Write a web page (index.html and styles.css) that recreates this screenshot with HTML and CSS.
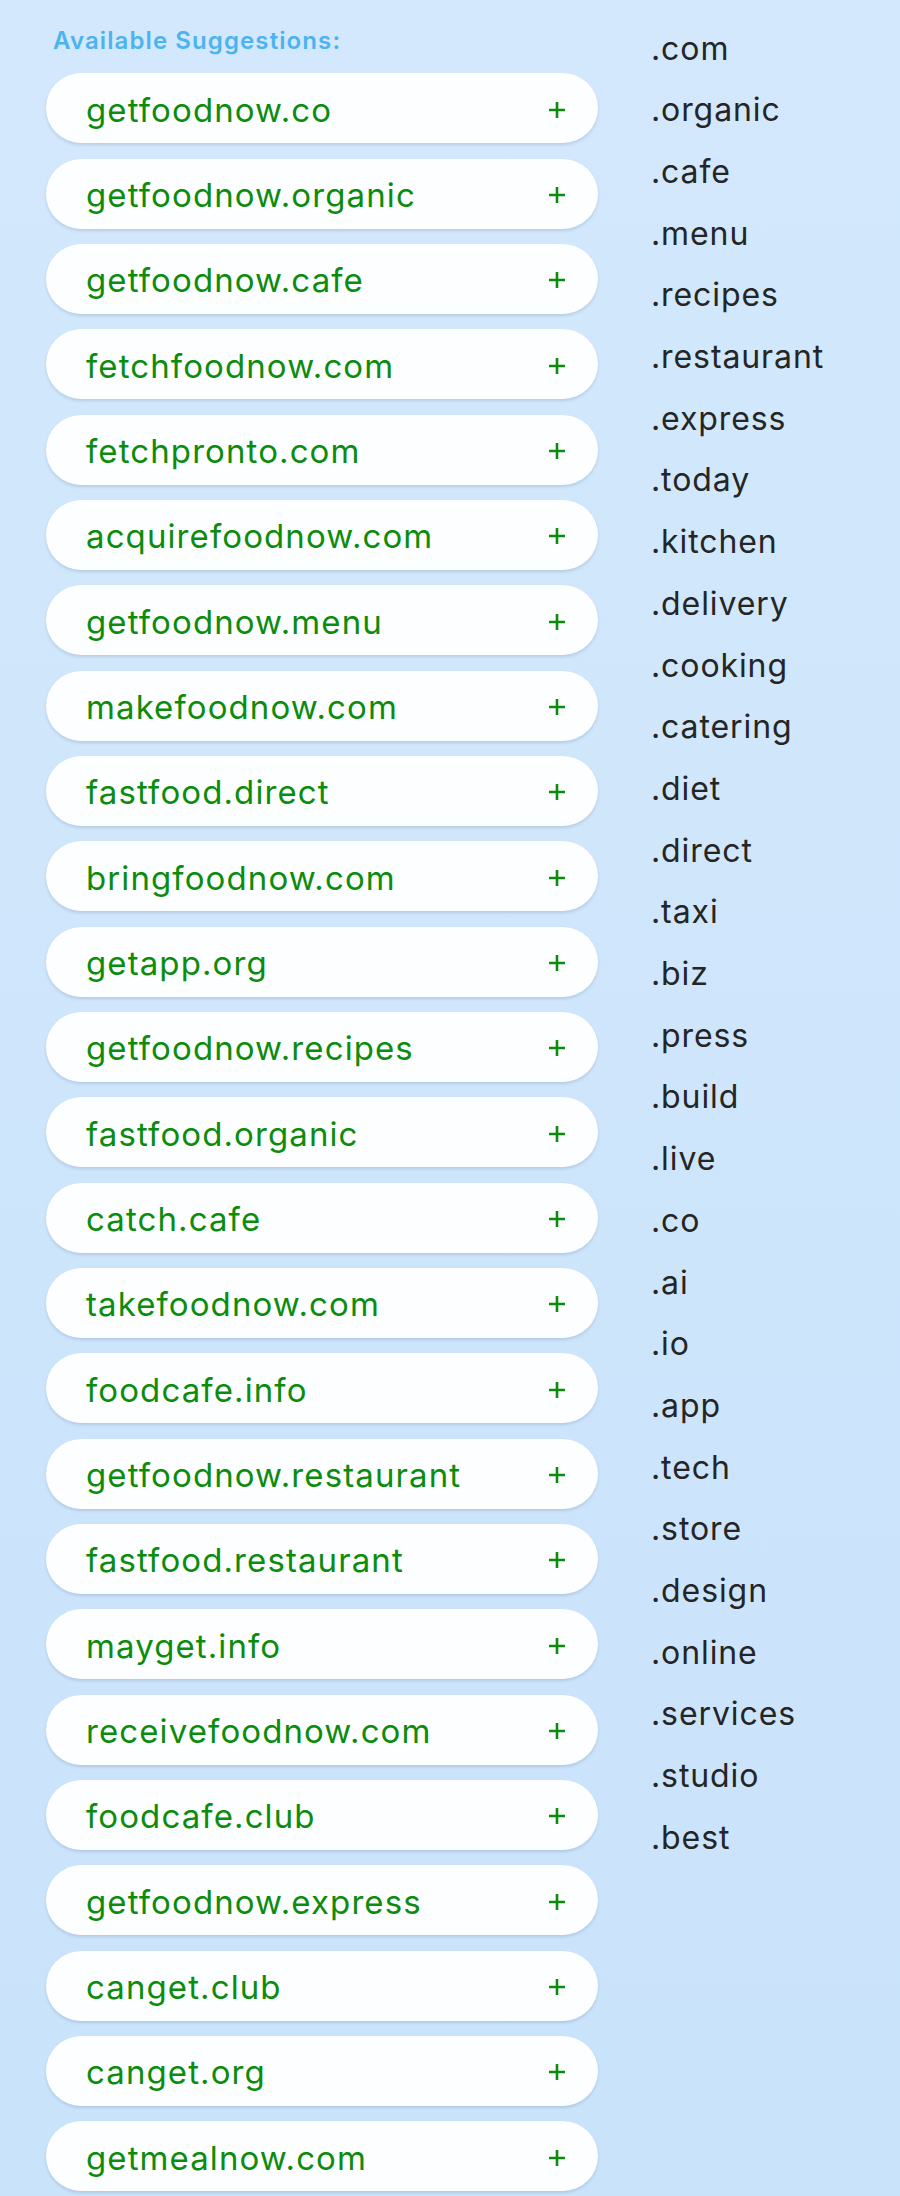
FILE: index.html
```html
<!DOCTYPE html>
<html lang="en">
<head>
<meta charset="utf-8">
<title>Available Suggestions</title>
<link rel="stylesheet" href="styles.css">
</head>
<body>
<div class="page">
  <section class="suggestions">
    <h2 class="heading">Available Suggestions:</h2>
    <ul class="pills">
      <li class="pill"><span class="name">getfoodnow.co</span><svg class="plus" viewBox="0 0 18 18"><path d="M9 1v16M1 9h16"/></svg></li>
      <li class="pill"><span class="name">getfoodnow.organic</span><svg class="plus" viewBox="0 0 18 18"><path d="M9 1v16M1 9h16"/></svg></li>
      <li class="pill"><span class="name">getfoodnow.cafe</span><svg class="plus" viewBox="0 0 18 18"><path d="M9 1v16M1 9h16"/></svg></li>
      <li class="pill"><span class="name">fetchfoodnow.com</span><svg class="plus" viewBox="0 0 18 18"><path d="M9 1v16M1 9h16"/></svg></li>
      <li class="pill"><span class="name">fetchpronto.com</span><svg class="plus" viewBox="0 0 18 18"><path d="M9 1v16M1 9h16"/></svg></li>
      <li class="pill"><span class="name">acquirefoodnow.com</span><svg class="plus" viewBox="0 0 18 18"><path d="M9 1v16M1 9h16"/></svg></li>
      <li class="pill"><span class="name">getfoodnow.menu</span><svg class="plus" viewBox="0 0 18 18"><path d="M9 1v16M1 9h16"/></svg></li>
      <li class="pill"><span class="name">makefoodnow.com</span><svg class="plus" viewBox="0 0 18 18"><path d="M9 1v16M1 9h16"/></svg></li>
      <li class="pill"><span class="name">fastfood.direct</span><svg class="plus" viewBox="0 0 18 18"><path d="M9 1v16M1 9h16"/></svg></li>
      <li class="pill"><span class="name">bringfoodnow.com</span><svg class="plus" viewBox="0 0 18 18"><path d="M9 1v16M1 9h16"/></svg></li>
      <li class="pill"><span class="name">getapp.org</span><svg class="plus" viewBox="0 0 18 18"><path d="M9 1v16M1 9h16"/></svg></li>
      <li class="pill"><span class="name">getfoodnow.recipes</span><svg class="plus" viewBox="0 0 18 18"><path d="M9 1v16M1 9h16"/></svg></li>
      <li class="pill"><span class="name">fastfood.organic</span><svg class="plus" viewBox="0 0 18 18"><path d="M9 1v16M1 9h16"/></svg></li>
      <li class="pill"><span class="name">catch.cafe</span><svg class="plus" viewBox="0 0 18 18"><path d="M9 1v16M1 9h16"/></svg></li>
      <li class="pill"><span class="name">takefoodnow.com</span><svg class="plus" viewBox="0 0 18 18"><path d="M9 1v16M1 9h16"/></svg></li>
      <li class="pill"><span class="name">foodcafe.info</span><svg class="plus" viewBox="0 0 18 18"><path d="M9 1v16M1 9h16"/></svg></li>
      <li class="pill"><span class="name">getfoodnow.restaurant</span><svg class="plus" viewBox="0 0 18 18"><path d="M9 1v16M1 9h16"/></svg></li>
      <li class="pill"><span class="name">fastfood.restaurant</span><svg class="plus" viewBox="0 0 18 18"><path d="M9 1v16M1 9h16"/></svg></li>
      <li class="pill"><span class="name">mayget.info</span><svg class="plus" viewBox="0 0 18 18"><path d="M9 1v16M1 9h16"/></svg></li>
      <li class="pill"><span class="name">receivefoodnow.com</span><svg class="plus" viewBox="0 0 18 18"><path d="M9 1v16M1 9h16"/></svg></li>
      <li class="pill"><span class="name">foodcafe.club</span><svg class="plus" viewBox="0 0 18 18"><path d="M9 1v16M1 9h16"/></svg></li>
      <li class="pill"><span class="name">getfoodnow.express</span><svg class="plus" viewBox="0 0 18 18"><path d="M9 1v16M1 9h16"/></svg></li>
      <li class="pill"><span class="name">canget.club</span><svg class="plus" viewBox="0 0 18 18"><path d="M9 1v16M1 9h16"/></svg></li>
      <li class="pill"><span class="name">canget.org</span><svg class="plus" viewBox="0 0 18 18"><path d="M9 1v16M1 9h16"/></svg></li>
      <li class="pill"><span class="name">getmealnow.com</span><svg class="plus" viewBox="0 0 18 18"><path d="M9 1v16M1 9h16"/></svg></li>
    </ul>
  </section>
  <ul class="tlds">
    <li>.com</li>
    <li>.organic</li>
    <li>.cafe</li>
    <li>.menu</li>
    <li>.recipes</li>
    <li>.restaurant</li>
    <li>.express</li>
    <li>.today</li>
    <li>.kitchen</li>
    <li>.delivery</li>
    <li>.cooking</li>
    <li>.catering</li>
    <li>.diet</li>
    <li>.direct</li>
    <li>.taxi</li>
    <li>.biz</li>
    <li>.press</li>
    <li>.build</li>
    <li>.live</li>
    <li>.co</li>
    <li>.ai</li>
    <li>.io</li>
    <li>.app</li>
    <li>.tech</li>
    <li>.store</li>
    <li>.design</li>
    <li>.online</li>
    <li>.services</li>
    <li>.studio</li>
    <li>.best</li>
  </ul>
</div>
</body>
</html>
```
FILE: styles.css
```css
html, body {
  margin: 0;
  padding: 0;
}

body {
  background: linear-gradient(180deg, #d3e8fc 0%, #c9e3fb 100%);
  min-height: 2196px;
  font-family: Inter, "Noto Sans", sans-serif;
}

.page {
  display: flex;
  align-items: flex-start;
  padding-left: 46px;
}

.suggestions {
  width: 551.5px;
  padding-top: 25.6px;
}

.heading {
  margin: 0 0 17.7px 7px;
  font-size: 24px;
  line-height: 30px;
  font-weight: 600;
  letter-spacing: 1.1px;
  color: #4db3ee;
}

.pills {
  list-style: none;
  margin: 0;
  padding: 0;
  display: flex;
  flex-direction: column;
  gap: 15.33px;
}

.pill {
  height: 70px;
  box-sizing: border-box;
  padding: 3px 31.5px 0 40px;
  border-radius: 35px;
  background: #fdfeff;
  box-shadow: 0 2px 3px rgba(60, 90, 130, 0.18);
  display: flex;
  align-items: center;
  justify-content: space-between;
}

.name {
  font-size: 33px;
  letter-spacing: 1.1px;
  color: #0c8c0c;
}

.plus {
  width: 18px;
  height: 18px;
  flex: none;
  fill: none;
  stroke: #0c8c0c;
  stroke-width: 2.6;
}

.tlds {
  list-style: none;
  margin: 0 0 0 53.5px;
  padding: 17.5px 0 0 0;
  font-size: 32px;
  line-height: 61.7px;
  letter-spacing: 0.9px;
  color: #252525;
}
```
